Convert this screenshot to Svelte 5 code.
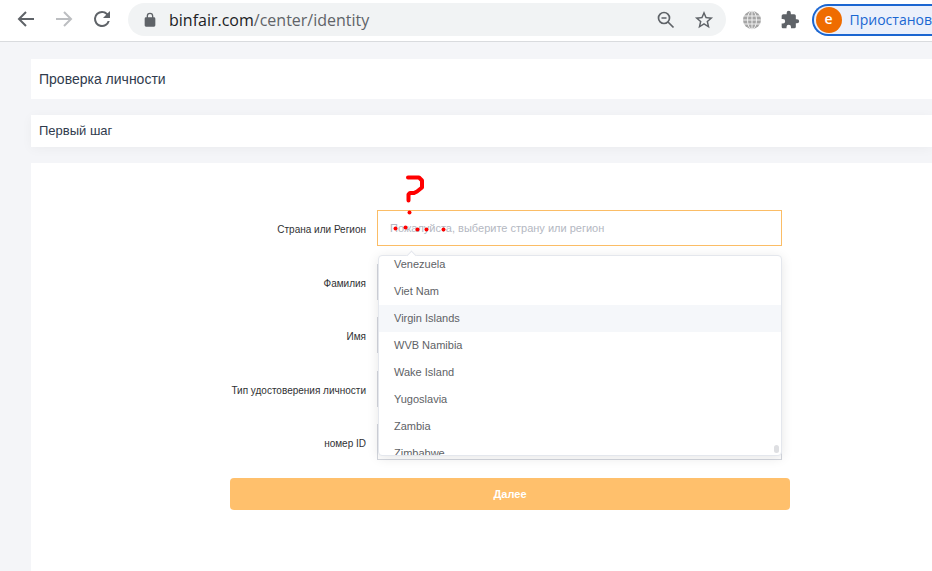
<script lang="ts">
  import { onMount } from 'svelte';

  const countries = [
    'Venezuela',
    'Viet Nam',
    'Virgin Islands',
    'WVB Namibia',
    'Wake Island',
    'Yugoslavia',
    'Zambia',
    'Zimbabwe',
  ];

  let active = $state('Virgin Islands');
  let country = $state('');
  let list: HTMLUListElement;

  onMount(() => {
    list.scrollTop = 5;
  });
</script>

<div class="browser">
  <header class="toolbar">
    <nav class="nav">
      <button class="icon" aria-label="Назад">
        <svg width="24" height="24" viewBox="0 0 24 24" fill="none" stroke="#5f6368" stroke-width="2">
          <path d="M20 11H5M12 4l-7 7 7 7" />
        </svg>
      </button>
      <button class="icon" aria-label="Вперёд">
        <svg width="24" height="24" viewBox="0 0 24 24" fill="none" stroke="#bcbec1" stroke-width="2">
          <path d="M4 11h15M12 4l7 7-7 7" />
        </svg>
      </button>
      <button class="icon" aria-label="Обновить">
        <svg width="24" height="24" viewBox="0 1 24 24" fill="#5f6368">
          <path d="M17.65 6.35A7.96 7.96 0 0 0 12 4a8 8 0 1 0 7.73 10h-2.08A6 6 0 1 1 12 6c1.66 0 3.14.69 4.22 1.78L13 11h7V4z" />
        </svg>
      </button>
    </nav>

    <div class="omnibox">
      <svg width="16" height="16" viewBox="0 0 24 24" fill="#5f6368">
        <path d="M18 8h-1V6A5 5 0 0 0 7 6v2H6a2 2 0 0 0-2 2v10c0 1.100.9 2 2 2h12a2 2 0 0 0 2-2V10a2 2 0 0 0-2-2zM9 8V6a3 3 0 0 1 6 0v2z" />
      </svg>
      <span class="url"><span class="host">binfair.com</span>/center/identity</span>
      <button class="icon" aria-label="Масштаб">
        <svg width="20" height="20" viewBox="0 0 20 20" fill="none" stroke="#5f6368" stroke-width="1.700">
          <circle cx="8" cy="8" r="5.500" />
          <path d="M5.500 8h5M12 12l5.500 5.500" />
        </svg>
      </button>
      <button class="icon" aria-label="Добавить в закладки">
        <svg width="20" height="20" viewBox="1 1 22 22" fill="#5f6368">
          <path d="M22 9.240l-7.190-.62L12 2 9.190 8.630 2 9.240l5.460 4.730L5.820 21 12 17.270 18.180 21l-1.630-7.030zM12 15.400l-3.760 2.270 1-4.280-3.320-2.880 4.380-.38L12 6.100l1.710 4.040 4.380.38-3.320 2.880 1 4.280z" />
        </svg>
      </button>
    </div>

    <div class="extensions">
      <button class="icon" aria-label="Перевод">
        <svg width="20" height="20" viewBox="0 0 20 20">
          <circle cx="10" cy="10" r="9" fill="#a5a5a5" />
          <g fill="none" stroke="#f0f0f0">
            <path d="M10 1v18M1 10h18M2 6h16M2 14h16" />
            <ellipse cx="10" cy="10" rx="4.500" ry="9" />
          </g>
        </svg>
      </button>
      <button class="icon" aria-label="Расширения">
        <svg width="20" height="20" viewBox="0 0 24 24" fill="#5f6368">
          <path d="M20.500 11H19V7a2 2 0 0 0-2-2h-4V3.500a2.500 2.500 0 0 0-5 0V5H4a2 2 0 0 0-2 2v3.800h1.500a2.700 2.700 0 0 1 0 5.400H2V20c0 1.100.9 2 2 2h3.800v-1.500a2.700 2.700 0 0 1 5.400 0V22H17a2 2 0 0 0 2-2v-4h1.500a2.500 2.500 0 0 0 0-5z" />
        </svg>
      </button>
    </div>

    <button class="profile">
      <span class="avatar">e</span>
      <span>Приостанов</span>
    </button>
  </header>

  <main>
    <h1 class="card title">Проверка личности</h1>
    <h2 class="card step">Первый шаг</h2>

    <section class="card body">
      <form onsubmit={(e) => e.preventDefault()}>
        <div class="fields">
          <div class="row">
            <label for="country">Страна или Регион</label>
            <div class="control">
              <input
                id="country"
                class="focused"
                readonly
                value={country}
                placeholder="Пожалуйста, выберите страну или регион"
              />
              <div class="dropdown">
                <ul bind:this={list} role="listbox" aria-label="Страна или Регион">
                  {#each countries as name}
                    <li role="option" aria-selected={name === country} class:active={name === active}>
                      <button
                        type="button"
                        onmouseenter={() => (active = name)}
                        onclick={() => (country = name)}
                      >{name}</button>
                    </li>
                  {/each}
                </ul>
                <span class="thumb"></span>
              </div>
              <svg class="scribble" width="60" height="64" viewBox="0 0 60 64" fill="none" stroke="#f00">
                <path
                  d="M19 5.500h11l3 3v7l-5 4-3 1.500h-4l-1.500 1.500v6"
                  stroke-width="4"
                  stroke-linecap="round"
                  stroke-linejoin="round"
                />
                <g fill="#f00" stroke="none">
                  <circle cx="20.500" cy="40.500" r="2" />
                  <circle cx="6.500" cy="56.500" r="2" />
                  <circle cx="16.500" cy="55.500" r="2" />
                  <circle cx="28.500" cy="57.500" r="2" />
                  <circle cx="37.500" cy="57.500" r="2" />
                  <circle cx="54.500" cy="57.500" r="2" />
                </g>
              </svg>
            </div>
          </div>
          <div class="row">
            <label for="surname">Фамилия</label>
            <div class="control"><input id="surname" /></div>
          </div>
          <div class="row">
            <label for="name">Имя</label>
            <div class="control"><input id="name" /></div>
          </div>
          <div class="row">
            <label for="id-type">Тип удостоверения личности</label>
            <div class="control"><select id="id-type"></select></div>
          </div>
          <div class="row">
            <label for="id-number">номер ID</label>
            <div class="control"><input id="id-number" /></div>
          </div>
        </div>
        <button class="submit">Далее</button>
      </form>
    </section>
  </main>
</div>

<style>
  :global(body) {
    margin: 0;
    background: #f4f5f8;
  }

  .browser {
    display: flex;
    flex-direction: column;
    min-height: 100vh;
    overflow: hidden;
    font-family: 'Liberation Sans', Arial, sans-serif;
  }

  button {
    padding: 0;
    border: 0;
    background: none;
    font-family: inherit;
    cursor: pointer;
  }

  .toolbar {
    display: flex;
    align-items: center;
    height: 42px;
    box-sizing: border-box;
    padding: 0 0 2px 14px;
    background: #fff;
    border-bottom: 1px solid #d9dbde;
    font-family: 'Open Sans', 'Noto Sans', sans-serif;
  }

  .nav {
    display: flex;
    gap: 14px;
    margin-right: 14px;
  }

  .icon {
    display: flex;
  }

  .omnibox {
    display: flex;
    flex: 1;
    align-items: center;
    gap: 18px;
    height: 33px;
    box-sizing: border-box;
    padding: 0 12px 0 14px;
    border-radius: 17px;
    background: #f1f3f4;
  }

  .url {
    flex: 1;
    margin-left: -7px;
    color: #5f6368;
    font-size: 16px;
    line-height: 24px;
    white-space: nowrap;
  }

  .host {
    color: #202124;
  }

  .extensions {
    display: flex;
    gap: 18px;
    margin: 0 12px 0 16px;
  }

  .profile {
    display: flex;
    align-items: center;
    gap: 8px;
    height: 32px;
    box-sizing: border-box;
    padding-left: 2px;
    border: 2px solid #1b66d1;
    border-right: 0;
    border-radius: 16px 0 0 16px;
    background: #ebf0fb;
    color: #1967d2;
    font-size: 14px;
    white-space: nowrap;
  }

  .avatar {
    flex: none;
    width: 26px;
    height: 26px;
    border-radius: 50%;
    background: #ef6c00;
    color: #fff;
    font-weight: 600;
    line-height: 24px;
  }

  main {
    display: flex;
    flex: 1;
    flex-direction: column;
    gap: 16px;
    padding: 17px 0 0 31px;
  }

  .card {
    margin: 0;
    background: #fff;
  }

  .title,
  .step {
    padding: 0 8px;
    color: #303b4d;
    font-weight: 400;
  }

  .title {
    font-size: 14px;
    line-height: 40px;
  }

  .step {
    font-size: 13px;
    line-height: 32px;
    box-shadow: 0 2px 12px rgba(0, 0, 0, 0.04);
  }

  .body {
    position: relative;
    flex: 1;
    padding: 47px 142px 61px 199px;
  }

  form {
    max-width: 560px;
  }

  .fields {
    display: flex;
    flex-direction: column;
    justify-content: space-between;
    height: 250px;
    margin-right: 8px;
  }

  .row {
    display: grid;
    grid-template-columns: 136px 1fr;
    gap: 11px;
    align-items: center;
  }

  label {
    padding-top: 4px;
    color: #303133;
    font-size: 10px;
    line-height: 32px;
    text-align: right;
    white-space: nowrap;
  }

  .control {
    position: relative;
  }

  input,
  select {
    display: block;
    width: 100%;
    height: 36px;
    box-sizing: border-box;
    padding: 0 12px;
    border: 1px solid #d4d7de;
    border-radius: 0;
    outline: 0;
    background: #fff;
    color: #606266;
    font: 11px 'Liberation Sans', Arial, sans-serif;
    appearance: none;
  }

  input::placeholder {
    color: #b4b8c2;
    opacity: 1;
  }

  .focused {
    border-color: #fbbd66;
  }

  .dropdown {
    position: absolute;
    z-index: 1;
    top: 45px;
    left: 1px;
    right: 0;
    border: 1px solid #e4e7ed;
    border-radius: 4px;
    background: #fff;
    box-shadow: 0 2px 12px rgba(0, 0, 0, 0.1);
  }

  .dropdown::before {
    content: '';
    position: absolute;
    top: -4px;
    left: 29px;
    width: 6px;
    height: 6px;
    border: 1px solid #e4e7ed;
    border-right: 0;
    border-bottom: 0;
    background: #fff;
    transform: rotate(45deg);
  }

  ul {
    position: relative;
    height: 199px;
    margin: 0;
    padding: 0;
    overflow: hidden;
    border-radius: 4px;
    list-style: none;
  }

  li button {
    display: block;
    width: 100%;
    height: 27px;
    padding: 0 15px;
    color: #606266;
    font-size: 11px;
    line-height: 27px;
    text-align: left;
  }

  .active {
    background: #f5f7fa;
  }

  .thumb {
    position: absolute;
    right: 2px;
    bottom: 2px;
    width: 5px;
    height: 8px;
    border-radius: 3px;
    background: #dedfe2;
  }

  .scribble {
    position: absolute;
    z-index: 2;
    top: -38px;
    left: 12px;
    pointer-events: none;
  }

  .submit {
    display: block;
    width: 100%;
    height: 32px;
    margin-top: 18px;
    border-radius: 4px;
    background: #ffc06c;
    color: #fff;
    font-size: 11px;
    font-weight: 700;
  }
</style>
